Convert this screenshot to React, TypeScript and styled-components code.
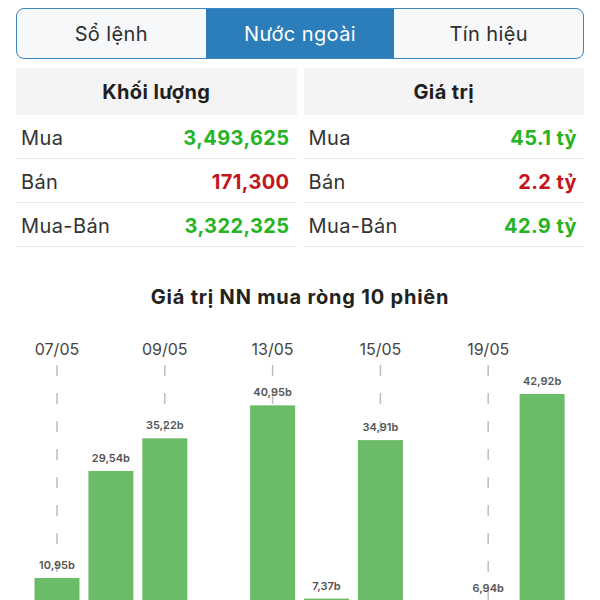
import React from "react";
import styled, { createGlobalStyle } from "styled-components";

const Global = createGlobalStyle`
  html, body { margin: 0; padding: 0; overflow: hidden; background: #ffffff; }
  body { font-family: Inter, "Noto Sans", "Liberation Sans", sans-serif; color: #2b2b2b; }
`;

const Page = styled.div`
  width: 600px;
  display: flex;
  flex-direction: column;
`;

const Top = styled.div`
  padding: 8px 16px 0 16px;
  display: flex;
  flex-direction: column;
  gap: 9px;
`;

const Tabs = styled.div`
  display: grid;
  grid-template-columns: 1fr 1fr 1fr;
  height: 51px;
  border: 1.5px solid #3a86c0;
  border-radius: 8px;
  overflow: hidden;
  background: #f6f8f9;
  box-sizing: border-box;
`;

const Tab = styled.div<{ $active?: boolean }>`
  display: flex;
  align-items: center;
  justify-content: center;
  font-size: 20px;
  letter-spacing: 0.4px;
  color: ${(p) => (p.$active ? "#ffffff" : "#2e2e2e")};
  background: ${(p) => (p.$active ? "#2b7eb9" : "transparent")};
`;

const Tables = styled.div`
  display: grid;
  grid-template-columns: 1fr 1fr;
  gap: 7px;
`;

const Table = styled.div`
  display: flex;
  flex-direction: column;
`;

const Head = styled.div`
  height: 47px;
  background: #f4f4f4;
  display: flex;
  align-items: center;
  justify-content: center;
  font-size: 20px;
  letter-spacing: 0.4px;
  font-weight: 700;
  color: #1f1f1f;
`;

const Row = styled.div`
  height: 44px;
  box-sizing: border-box;
  border-bottom: 1px solid #ececec;
  display: flex;
  align-items: center;
  justify-content: space-between;
  padding: 3px 7px 0 5px;
  font-size: 20px;
  letter-spacing: 0.4px;
`;

const Label = styled.span`
  color: #333333;
`;

const Value = styled.span<{ $tone: "up" | "down" }>`
  font-weight: 700;
  color: ${(p) => (p.$tone === "up" ? "#25b425" : "#c3151c")};
`;

const Title = styled.div`
  margin-top: 38px;
  text-align: center;
  font-size: 20px;
  letter-spacing: 0.8px;
  line-height: 24px;
  font-weight: 700;
  color: #222222;
`;

const ChartSvg = styled.svg`
  display: block;
`;

type Bar = { date: string; value: number | null; showDate: boolean };

const bars: Bar[] = [
  { date: "07/05", value: 10.95, showDate: true },
  { date: "08/05", value: 29.54, showDate: false },
  { date: "09/05", value: 35.22, showDate: true },
  { date: "12/05", value: null, showDate: false },
  { date: "13/05", value: 40.95, showDate: true },
  { date: "14/05", value: 7.37, showDate: false },
  { date: "15/05", value: 34.91, showDate: true },
  { date: "16/05", value: null, showDate: false },
  { date: "19/05", value: 6.94, showDate: true },
  { date: "20/05", value: 42.92, showDate: false },
];

const fmt = (v: number) => v.toFixed(2).replace(".", ",") + "b";

function Chart() {
  // svg top sits at page y = 309
  const top = 309;
  const baseline = 641 - top;
  const k = 5.755;
  const step = 53.9;
  const cx0 = 57;
  const bw = 45;
  return (
    <ChartSvg width={600} height={291} viewBox="0 0 600 291">
      {bars.map((b, i) => {
        const cx = cx0 + step * i;
        const h = b.value === null ? 0 : b.value * k;
        const barTop = baseline - h;
        return (
          <g key={b.date}>
            {b.showDate && (
              <>
                <text
                  x={cx}
                  y={42}
                  textAnchor="middle"
                  dominantBaseline="middle"
                  fontSize={16}
                  fill="#454545"
                  fontFamily="Inter, 'Noto Sans', sans-serif"
                >
                  {b.date}
                </text>
                <line
                  x1={cx}
                  x2={cx}
                  y1={56}
                  y2={b.value === null ? baseline : barTop}
                  stroke="#bdbdbd"
                  strokeWidth={1.5}
                  strokeDasharray="11 17"
                />
              </>
            )}
            {b.value !== null && (
              <>
                <rect x={cx - bw / 2} y={barTop} width={bw} height={h} fill="#6cbb69" />
                <text
                  x={cx}
                  y={barTop - 12}
                  textAnchor="middle"
                  dominantBaseline="middle"
                  fontSize={11}
                  fontWeight={600}
                  fill="#555555"
                  fontFamily="Inter, 'Noto Sans', sans-serif"
                >
                  {fmt(b.value)}
                </text>
              </>
            )}
          </g>
        );
      })}
    </ChartSvg>
  );
}

export default function App() {
  return (
    <Page>
      <Global />
      <Top>
        <Tabs>
          <Tab>Sổ lệnh</Tab>
          <Tab $active>Nước ngoài</Tab>
          <Tab>Tín hiệu</Tab>
        </Tabs>
        <Tables>
          <Table>
            <Head>Khối lượng</Head>
            <Row>
              <Label>Mua</Label>
              <Value $tone="up">3,493,625</Value>
            </Row>
            <Row>
              <Label>Bán</Label>
              <Value $tone="down">171,300</Value>
            </Row>
            <Row>
              <Label>Mua-Bán</Label>
              <Value $tone="up">3,322,325</Value>
            </Row>
          </Table>
          <Table>
            <Head>Giá trị</Head>
            <Row>
              <Label>Mua</Label>
              <Value $tone="up">45.1 tỷ</Value>
            </Row>
            <Row>
              <Label>Bán</Label>
              <Value $tone="down">2.2 tỷ</Value>
            </Row>
            <Row>
              <Label>Mua-Bán</Label>
              <Value $tone="up">42.9 tỷ</Value>
            </Row>
          </Table>
        </Tables>
      </Top>
      <Title>Giá trị NN mua ròng 10 phiên</Title>
      <Chart />
    </Page>
  );
}
